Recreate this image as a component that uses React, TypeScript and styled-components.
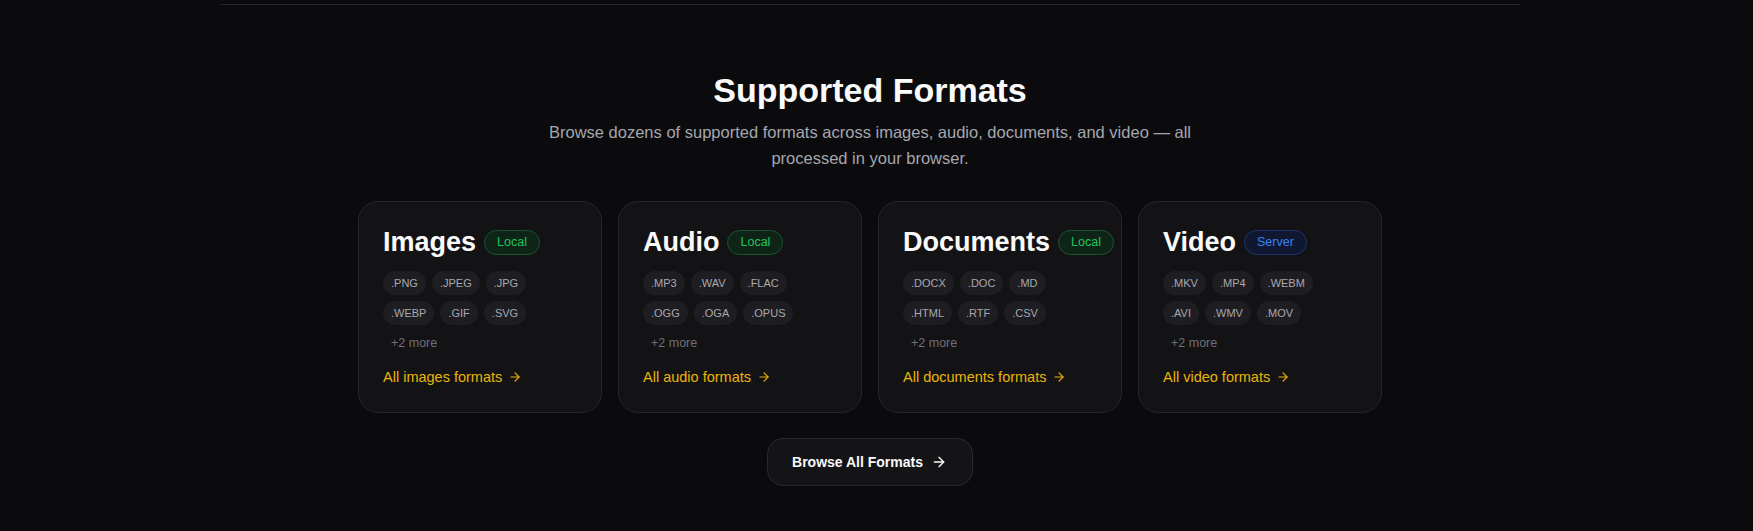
import React from 'react'
import styled, { createGlobalStyle } from 'styled-components'
import { ArrowRight } from 'lucide-react'

const GlobalStyle = createGlobalStyle`
  html, body {
    margin: 0;
    background: #0b0b0d;
  }
  body {
    font-family: 'Liberation Sans', Arial, sans-serif;
    -webkit-font-smoothing: antialiased;
  }
`

type Engine = 'local' | 'server'

interface FormatGroup {
  title: string
  engine: Engine
  formats: string[]
  extra: number
}

const groups: FormatGroup[] = [
  { title: 'Images', engine: 'local', formats: ['.PNG', '.JPEG', '.JPG', '.WEBP', '.GIF', '.SVG'], extra: 2 },
  { title: 'Audio', engine: 'local', formats: ['.MP3', '.WAV', '.FLAC', '.OGG', '.OGA', '.OPUS'], extra: 2 },
  { title: 'Documents', engine: 'local', formats: ['.DOCX', '.DOC', '.MD', '.HTML', '.RTF', '.CSV'], extra: 2 },
  { title: 'Video', engine: 'server', formats: ['.MKV', '.MP4', '.WEBM', '.AVI', '.WMV', '.MOV'], extra: 2 },
]

const Page = styled.div`
  margin-right: 13px;
`

const Divider = styled.div`
  max-width: 1300px;
  height: 1px;
  margin: 4px auto 0;
  background: #26262a;
`

const Section = styled.section`
  display: flex;
  flex-direction: column;
  align-items: center;
  padding: 65px 0 45px;
`

const Heading = styled.h2`
  margin: 0;
  font-size: 34px;
  line-height: 40px;
  font-weight: 700;
  color: #fafafa;
`

const Subtitle = styled.p`
  margin: 9px 0 0;
  max-width: 694px;
  font-size: 16.5px;
  line-height: 26px;
  color: #a6a6ae;
  text-align: center;
`

const CardGrid = styled.div`
  display: grid;
  grid-template-columns: repeat(4, 244px);
  gap: 16px;
  margin-top: 30px;
`

const Card = styled.div`
  box-sizing: border-box;
  height: 212px;
  padding: 23px 24px;
  background: #131316;
  border: 1px solid #26262a;
  border-radius: 20px;
  display: flex;
  flex-direction: column;
`

const TitleRow = styled.div`
  display: flex;
  align-items: center;
  gap: 8px;
  height: 34px;
`

const CardTitle = styled.h3`
  margin: 0;
  font-size: 27px;
  line-height: 34px;
  font-weight: 700;
  color: #fafafa;
`

const Badge = styled.span<{ $engine: Engine }>`
  display: inline-flex;
  align-items: center;
  height: 25px;
  box-sizing: border-box;
  padding: 0 12px;
  border-radius: 999px;
  font-size: 12.5px;
  color: ${(p) => (p.$engine === 'local' ? '#22c55e' : '#3b82f6')};
  background: ${(p) => (p.$engine === 'local' ? '#0d2416' : '#0f1830')};
  border: 1px solid ${(p) => (p.$engine === 'local' ? '#1b5430' : '#1e3470')};
`

const ChipList = styled.div`
  display: flex;
  flex-wrap: wrap;
  gap: 6px;
  max-width: 190px;
  margin-top: 12px;
`

const Chip = styled.span<{ $muted?: boolean }>`
  height: 24px;
  padding: 0 8px;
  border-radius: 12px;
  font-size: ${(p) => (p.$muted ? '12.5px' : '11px')};
  line-height: 24px;
  color: ${(p) => (p.$muted ? '#6f6f78' : '#a8a8b0')};
  background: ${(p) => (p.$muted ? 'transparent' : '#1e1e22')};
`

const FormatsLink = styled.a`
  display: inline-flex;
  align-items: center;
  gap: 6px;
  margin-top: 12px;
  font-size: 14.5px;
  line-height: 20px;
  color: #eab308;
  text-decoration: none;
`

const BrowseButton = styled.button`
  display: inline-flex;
  align-items: center;
  gap: 8px;
  height: 48px;
  margin-top: 25px;
  padding: 0 25px 0 24px;
  border: 1px solid #2a2a2e;
  border-radius: 16px;
  background: #141417;
  font-family: inherit;
  font-size: 14px;
  font-weight: 700;
  color: #fafafa;
  cursor: pointer;
`

const FormatCard: React.FC<{ group: FormatGroup }> = ({ group }) => (
  <Card>
    <TitleRow>
      <CardTitle>{group.title}</CardTitle>
      <Badge $engine={group.engine}>{group.engine === 'local' ? 'Local' : 'Server'}</Badge>
    </TitleRow>
    <ChipList>
      {group.formats.map((f) => (
        <Chip key={f}>{f}</Chip>
      ))}
      <Chip $muted>+{group.extra} more</Chip>
    </ChipList>
    <FormatsLink href="#">
      All {group.title.toLowerCase()} formats
      <ArrowRight size={14} strokeWidth={2} />
    </FormatsLink>
  </Card>
)

const App: React.FC = () => (
  <>
    <GlobalStyle />
    <Page>
      <Divider />
      <Section>
        <Heading>Supported Formats</Heading>
        <Subtitle>
          Browse dozens of supported formats across images, audio, documents, and video — all processed in your browser.
        </Subtitle>
        <CardGrid>
          {groups.map((g) => (
            <FormatCard key={g.title} group={g} />
          ))}
        </CardGrid>
        <BrowseButton>
          Browse All Formats
          <ArrowRight size={16} strokeWidth={2} />
        </BrowseButton>
      </Section>
    </Page>
  </>
)

export default App
